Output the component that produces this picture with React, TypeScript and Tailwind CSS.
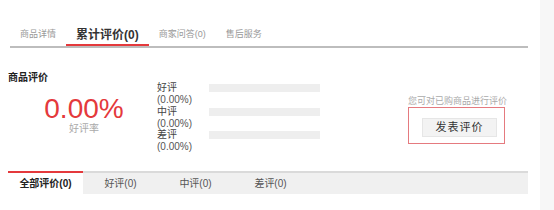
const font = "font-['Liberation_Sans','Noto_Sans_CJK_SC',sans-serif]";

const topTabs = [
  { label: "商品详情", active: false },
  { label: "累计评价(0)", active: true },
  { label: "商家问答(0)", active: false },
  { label: "售后服务", active: false },
];

const rates = ["好评", "中评", "差评"];

const bottomTabs = ["全部评价(0)", "好评(0)", "中评(0)", "差评(0)"];

export default function App() {
  return (
    <div className={`flex h-[210px] w-[554px] bg-white text-[#333] ${font}`}>
      <div className="flex w-[540px] flex-col">
        {/* Top tabs */}
        <div className="ml-[10px] mt-[26px] flex w-[518px] border-b-2 border-[#bdbdbd]">
          {topTabs.map((t) => (
            <div
              key={t.label}
              className={`flex h-[20px] items-center border-b-2 px-[10px] ${
                t.active
                  ? "border-[#e4393c] text-[12px] font-bold text-[#333]"
                  : "border-transparent text-[9px] text-[#999]"
              }`}
            >
              {t.label}
            </div>
          ))}
        </div>

        {/* Summary */}
        <div className="ml-[8px] flex h-[123px]">
          <div className="flex w-[149px] flex-col pt-[24px]">
            <p className="text-[10px] font-bold leading-[12px] text-[#222]">商品评价</p>
            <p className="mt-[11px] pl-[3px] text-center text-[28px] leading-[28px] text-[#e4393c]">
              0.00%
            </p>
            <p className="pl-[3px] text-center text-[10px] leading-[12px] text-[#aaa]">好评率</p>
          </div>

          <div className="flex flex-col pt-[34px]">
            {rates.map((r) => (
              <div key={r} className="flex h-[23.5px]">
                <div className="w-[52px] text-[10px] text-[#444]">
                  <p className="leading-[12px]">{r}</p>
                  <p className="leading-[11px] text-[#555]">(0.00%)</p>
                </div>
                <div className="mt-[2px] h-[8px] w-[111px] bg-[#eeeeee]" />
              </div>
            ))}
          </div>

          <div className="ml-[88px] flex flex-col pt-[47px]">
            <p className="text-[9px] leading-[12px] text-[#aaa]">您可对已购商品进行评价</p>
            <div className="h-[37px] w-[97px] border border-[#e57a7f] pl-[13px] pt-[10px]">
              <button className="flex h-[19px] w-[75px] items-center justify-center border border-[#e6e6e6] bg-[#f3f3f3] text-[11px] tracking-[1px] text-[#333]">
                发表评价
              </button>
            </div>
          </div>
        </div>

        {/* Bottom tabs */}
        <div className="ml-[8px] flex h-[23px] w-[520px] border-t-2 border-[#dadada] bg-[#f0f0f0]">
          {bottomTabs.map((t, i) => (
            <div
              key={t}
              className={`flex w-[75px] items-center justify-center text-[10px] ${
                i === 0
                  ? "-mt-[2px] border-t-2 border-[#e4393c] bg-white font-bold text-[#222]"
                  : "text-[#555]"
              }`}
            >
              {t}
            </div>
          ))}
        </div>
      </div>
      <div className="w-[14px] bg-[#f7f7f7]" />
    </div>
  );
}
